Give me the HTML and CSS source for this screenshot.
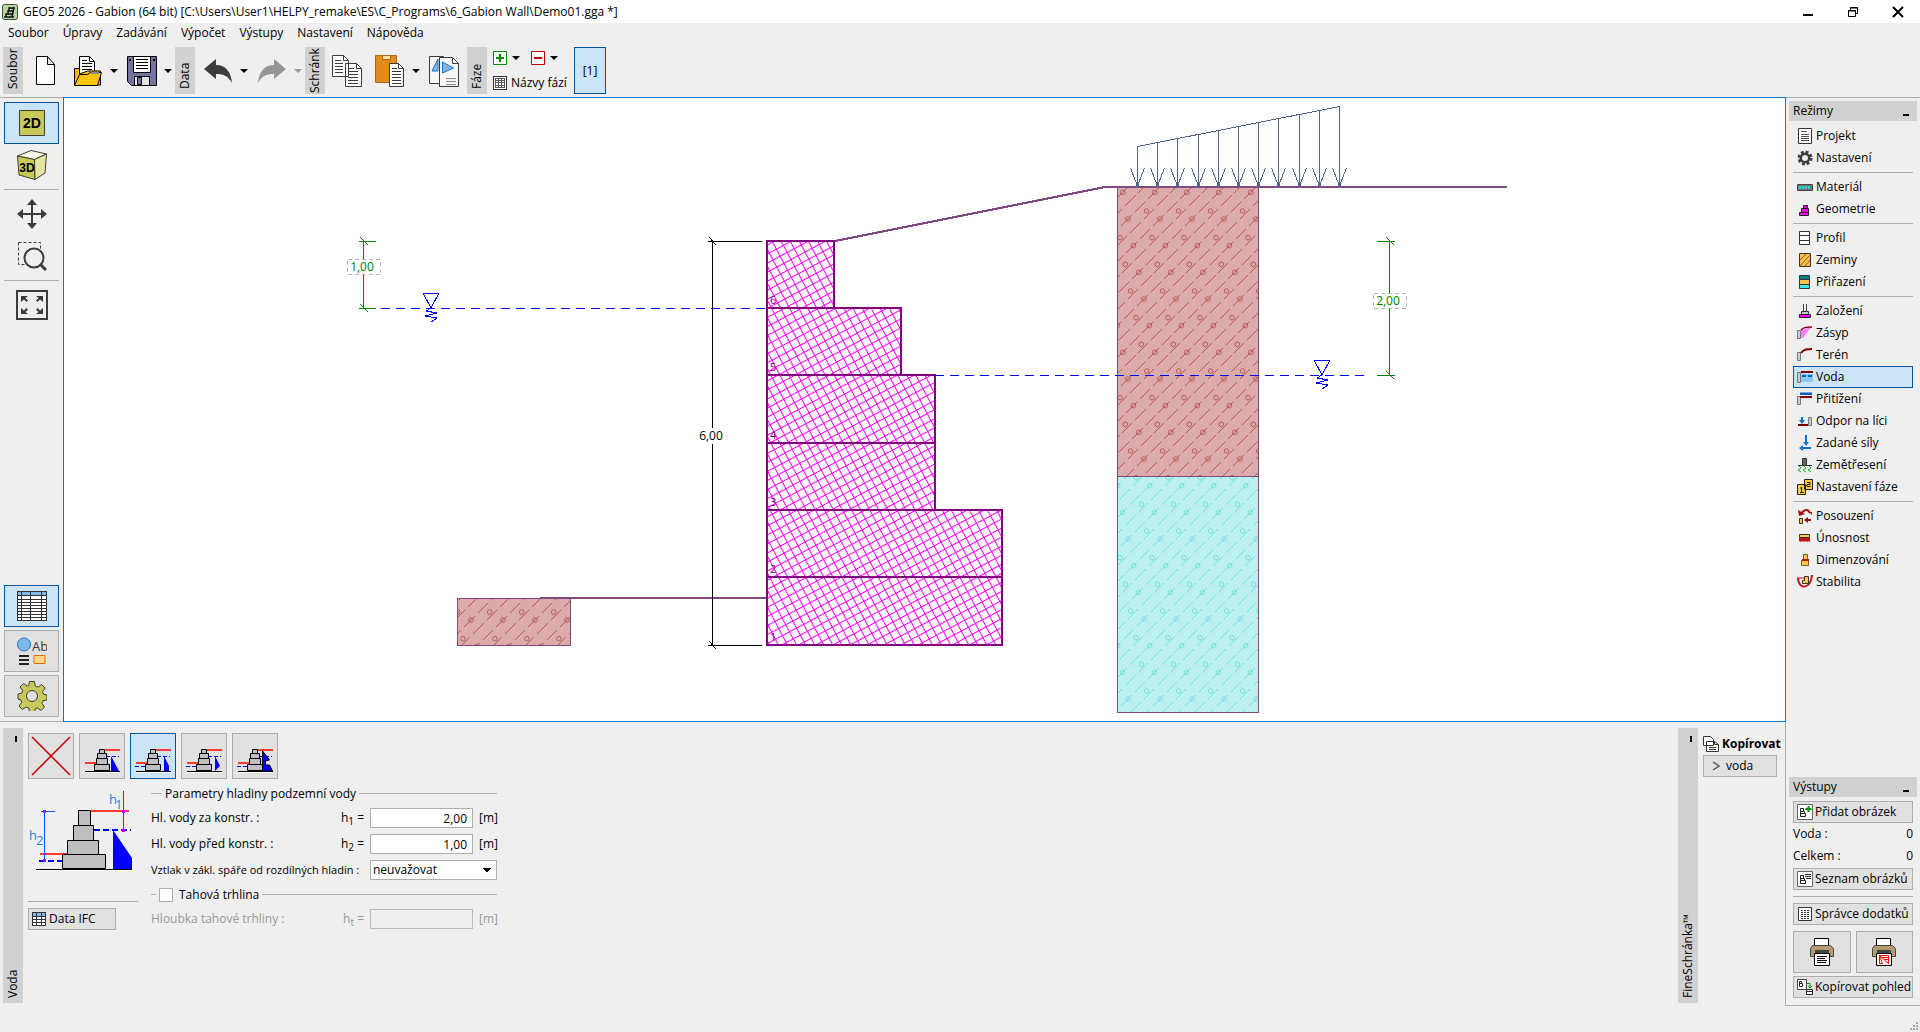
FILE: index.html
```html
<!DOCTYPE html>
<html lang="cs">
<head>
<meta charset="utf-8">
<title>GEO5 2026 - Gabion</title>
<link rel="stylesheet" href="styles.css">
</head>
<body>
<header class="titlebar">
  <svg class="app-icon" width="16" height="18" viewBox="0 0 16 18"><rect x=".5" y="1.500" width="15" height="15" rx="2" fill="#b9d3a4" stroke="#2e5a2b"/><path d="M2 14h10M4 14v-3h7M6 11V8h6M7 8V5h6M12 4l-2 10" fill="none" stroke="#111" stroke-width="1.500"/></svg>
  <h1>GEO5 2026 - Gabion (64 bit) [C:\Users\User1\HELPY_remake\ES\C_Programs\6_Gabion Wall\Demo01.gga *]</h1>
  <div class="window-buttons">
    <button aria-label="Minimalizovat"><svg width="12" height="12" viewBox="0 0 12 12"><path d="M1 9h10" stroke="#000" stroke-width="2"/></svg></button>
    <button aria-label="Obnovit"><svg width="12" height="12" viewBox="0 0 12 12" fill="none" stroke="#000"><path d="M1.500 4.500h7v6h-7zM3.500 4V1.500h7v6H9M1 5h8M3 2h8"/></svg></button>
    <button aria-label="Zavřít"><svg width="12" height="12" viewBox="0 0 12 12"><path d="M1 1l10 10M11 1L1 11" stroke="#000" stroke-width="2"/></svg></button>
  </div>
</header>
<nav class="menubar">
  <a href="#">Soubor</a><a href="#">Úpravy</a><a href="#">Zadávání</a><a href="#">Výpočet</a><a href="#">Výstupy</a><a href="#">Nastavení</a><a href="#">Nápověda</a>
</nav>
<div class="toolbar">
  <div class="handle"><span>Soubor</span></div>
  <button class="tool" aria-label="Nový"><svg width="24" height="32" viewBox="0 0 24 32"><path d="M3.500 1.500h11l7 8v20h-18zM14.500 1.500v8h7" fill="#fff" stroke="#000"/></svg></button>
  <div class="split"><button class="tool wide" aria-label="Otevřít"><svg width="30" height="32" viewBox="0 0 30 32"><path d="M6.500 20V1.500h10l5 5V18z" fill="#fff" stroke="#000"/><path d="M16.500 1.500v5h5M9 5.500h5M9 8.500h10M9 11.500h10M9 14.500h10" fill="none" stroke="#000"/><path d="M1.500 30V13.500h5V19l8-3h13V30z" fill="#ffb900" stroke="#000"/><path d="M1.500 30.500l5-11h8l3-2h11l-4 13z" fill="#ffc20e" stroke="#000"/><path d="M18 18h8" stroke="#888" stroke-width="2"/></svg></button><button class="drop" aria-label="Více"></button></div>
  <div class="split"><button class="tool wide" aria-label="Uložit"><svg width="30" height="32" viewBox="0 0 30 32"><path d="M.5 1.500h29v29h-25l-4-4z" fill="#73739f" stroke="#000"/><path d="M6.500 1.500h17v16h-17z" fill="#fff" stroke="#000"/><path d="M9 4.500h12M9 7.500h12M9 10.500h12M9 13.500h12" stroke="#000"/><path d="M7.500 21.500h15v9h-15z" fill="#e4e4e4" stroke="#000"/><path d="M10.500 22.500h4v7h-4z" fill="#73739f" stroke="#000"/><path d="M2 4h2v2H2zM26 4h2v2h-2z"/></svg></button><button class="drop" aria-label="Více"></button></div>
  <div class="handle"><span>Data</span></div>
  <div class="split"><button class="tool wide" aria-label="Zpět"><svg width="30" height="26" viewBox="0 0 30 26"><path d="M1 11L13 1v6c10 0 15 7 16 18-4-7-8-9-16-9v5z" fill="#3c3c3c"/></svg></button><button class="drop" aria-label="Více"></button></div>
  <div class="split"><button class="tool wide" aria-label="Znovu" disabled><svg width="30" height="26" viewBox="0 0 30 26"><path d="M29 11L17 1v6C7 7 2 14 1 25c4-7 8-9 16-9v5z" fill="#959595"/></svg></button><button class="drop dim" aria-label="Více" disabled></button></div>
  <div class="handle full"><span>Schránk</span></div>
  <button class="tool" aria-label="Kopírovat data"><svg width="32" height="34" viewBox="0 0 32 34"><path d="M1.500 1.500h11l5 5v16h-16zM14.500 9.500h11l5 5v18h-16z" fill="#fff" stroke="#3c3c3c"/><path d="M12.500 1.500v5h5M25.500 9.500v5h5M4 6.500h6M4 9.500h8M4 12.500h8M4 15.500h8M4 18.500h8M17 14.500h6M17 17.500h10M17 20.500h10M17 23.500h10M17 26.500h10M17 29.500h10" fill="none" stroke="#3c3c3c"/></svg></button>
  <div class="split"><button class="tool wide" aria-label="Vložit"><svg width="32" height="34" viewBox="0 0 32 34"><path d="M1.500 1.500h21v27h-21z" fill="#e38b1d" stroke="#b06a10"/><path d="M8.500 1.500h8v4h-8z" fill="#ffe2a8" stroke="#a86812"/><path d="M15.500 9.500h9l5 5v18h-14z" fill="#fff" stroke="#3c3c3c"/><path d="M24.500 9.500v5h5M18 14.500h5M18 17.500h9M18 20.500h9M18 23.500h9M18 26.500h9M18 29.500h9" fill="none" stroke="#3c3c3c"/></svg></button><button class="drop" aria-label="Více"></button></div>
  <button class="tool wide" aria-label="Kopírovat obrázek"><svg width="32" height="34" viewBox="0 0 32 34"><path d="M1.500 2.500h14v27h-14z" fill="#f6f6f6" stroke="#3c3c3c"/><path d="M4 17l6-12v12z" fill="#7db9ec" stroke="#1874c4"/><path d="M11.500 3.500h13l6 6v23h-19z" fill="#f6f6f6" stroke="#3c3c3c"/><path d="M24.500 3.500v6h6" fill="none" stroke="#3c3c3c"/><path d="M18 24.500h10M18 27.500h10M18 30.500h10" stroke="#888"/><path d="M14.500 8v11l11-5z" fill="#7db9ec" stroke="#1874c4"/></svg></button>
  <div class="handle"><span>Fáze</span></div>
  <div class="phases">
    <div class="phase-edit">
      <button class="mini" aria-label="Přidat fázi"><svg width="14" height="14" viewBox="0 0 14 14"><path d="M.5.5h13v13H.5z" fill="#fff" stroke="#008a00"/><path d="M7 3v8M3 7h8" stroke="#008a00" stroke-width="2"/></svg></button><button class="drop" aria-label="Více"></button>
      <button class="mini" aria-label="Odebrat fázi"><svg width="14" height="14" viewBox="0 0 14 14"><path d="M.5.5h13v13H.5z" fill="#fff" stroke="#c00000"/><path d="M3 7h8" stroke="#c00000" stroke-width="2"/></svg></button><button class="drop" aria-label="Více"></button>
    </div>
    <button class="phase-names"><svg width="14" height="14" viewBox="0 0 14 14" shape-rendering="crispEdges"><path d="M.5.5h13v13H.5z" fill="#fff" stroke="#333"/><path d="M2.500 2.500h9v9h-9zM2 4.500h10M2 6.500h10M2 9.500h10M5.500 2v10M8.500 2v10" fill="none" stroke="#555"/></svg>Názvy fází</button>
  </div>
  <button class="phase-tab">[1]</button>
</div>

<div class="workspace">
  <div class="left-part">
    <div class="view">
      <div class="viewbar">
        <button class="vbtn on" aria-label="2D"><svg width="28" height="28" viewBox="0 0 28 28"><path d="M1.500 1.500h25v25h-25z" fill="#c9c95a" stroke="#3c3c3c"/><text x="14" y="19" class="icon-text">2D</text></svg></button>
        <button class="vbtn flat" aria-label="3D"><svg width="32" height="32" viewBox="0 0 32 32" stroke="#3c3c3c" stroke-linejoin="round"><path d="M1.500 7l17 3.500 12-5.500L15 1.500z" fill="#fbfbe6"/><path d="M1.500 7l1.500 19 16 4.500-.5-20z" fill="#c9c95a"/><path d="M18.500 10.500l12-5.500-1.500 19-10 6.500z" fill="#e6e6a0"/><text x="11" y="23" class="icon-text small" stroke="none">3D</text></svg></button>
        <hr>
        <button class="vbtn flat" aria-label="Posun"><svg width="32" height="32" viewBox="0 0 32 32"><path d="M16 4v24M4 16h24" stroke="#3c3c3c" stroke-width="2"/><path d="M16 1l5 6H11zM16 31l5-6H11zM1 16l6-5v10zM31 16l-6-5v10z" fill="#3c3c3c"/></svg></button>
        <button class="vbtn flat" aria-label="Lupa"><svg width="30" height="30" viewBox="0 0 30 30" fill="none" stroke="#3c3c3c"><path d="M1.500 1.500h22v22h-22z" stroke-dasharray="3 2"/><circle cx="17" cy="17" r="9.500" stroke-width="2" fill="#efefef"/><path d="M23 23l6 6" stroke-width="3"/></svg></button>
        <hr>
        <button class="vbtn flat" aria-label="Zobrazit vše"><svg width="32" height="30" viewBox="0 0 32 30"><path d="M1 1h30v28H1z" fill="none" stroke="#3c3c3c" stroke-width="2"/><path d="M5 6h7l-2.500 2L12 10.500 10.500 12 8 9.500 5 12zM27 6h-7l2.500 2-2.500 2.500 1.500 1.500L24 9.500l3 2.500zM5 24h7l-2.500-2 2.500-2.500-1.500-1.500L8 20.500 5 18zM27 24h-7l2.500-2-2.500-2.500 1.500-1.500 2.500 2.500 3-2.500z" fill="#3c3c3c"/></svg></button>
        <div class="vbar-bottom">
          <button class="vbtn on" aria-label="Tabulka"><svg width="30" height="30" viewBox="0 0 30 30" shape-rendering="crispEdges"><path d="M0 0h30v30H0z" fill="#fff"/><path d="M0 0h30v5H0z" fill="#7fb9ea"/><path d="M.5.5h29v29H.5zM0 4.500h30M0 8.500h30M0 11.500h30M0 14.500h30M0 17.500h30M0 20.500h30M0 23.500h30M0 26.500h30M4.500 0v30M13.500 0v30M24.500 0v30" fill="none" stroke="#333"/></svg></button>
          <button class="vbtn" aria-label="Kreslení"><svg width="30" height="28" viewBox="0 0 30 28"><circle cx="7" cy="7.500" r="6.500" fill="#7fb9ea" stroke="#1874c4"/><text x="23" y="14" class="ab-text">Ab</text><path d="M2 19h10M2 23h10M2 27h10" stroke="#222" stroke-width="2"/><path d="M17 18.500h11v8H17z" fill="#fbd78a" stroke="#e07000"/></svg></button>
          <button class="vbtn" aria-label="Nastavení zobrazení"><svg width="30" height="30" viewBox="0 0 30 30"><path d="M12.500 1h5l.8 4.500 2.700 1.200 3.700-2.700 3.500 3.500-2.700 3.700 1 2.500 3.500.8v5l-4 .8-1 2.500 2.500 3.700-3.500 3.500-3.700-2.700-2 .9-.8 3.300h-5l-.8-4-2.700-1-3.500 2.500-3.500-3.500 2.700-3.700-1-2.500L1 18.500v-5l3.700-.8 1-2.500L3 6.500 6.500 3l3.700 2.700 1.500-.6z" transform="translate(0 -.5)" fill="#c9c95a" stroke="#3c3c3c"/><circle cx="15" cy="15" r="5.500" fill="#e1e1e1" stroke="#3c3c3c"/></svg></button>
        </div>
      </div>
      <main class="canvas">
        <svg class="drawing" viewBox="64 98 1721 623" shape-rendering="crispEdges">
          <defs>
            <g id="cell"><g shape-rendering="auto"><circle r="2.300"/><circle cx="18.670" cy="-8" r="2.300"/></g><path d="M-7 7L4-4M7-7L17-17M2 14L13 3M15.500.5l10-10"/></g>
            <g id="row"><use href="#cell" x="-64"/><use href="#cell" x="-32"/><use href="#cell"/><use href="#cell" x="32"/><use href="#cell" x="64"/></g>
            <g id="rows" fill="none"><use href="#row" x="-5.330" y="-26.670"/><use href="#row"/><use href="#row" x="5.330" y="26.670"/><use href="#row" x="10.670" y="53.330"/><use href="#row" x="16" y="80"/><use href="#row" x="21.330" y="106.670"/><use href="#row" x="26.670" y="133.330"/><use href="#row" y="160"/></g>
            <pattern id="soil-a" width="32" height="160" patternUnits="userSpaceOnUse" x="1128" y="219"><use href="#rows" stroke="#b85858"/></pattern>
            <pattern id="soil-b" width="32" height="160" patternUnits="userSpaceOnUse" x="1128" y="219"><use href="#rows" stroke="#74dfdb"/></pattern>
            <pattern id="soil-c" width="32" height="160" patternUnits="userSpaceOnUse" x="471" y="620"><use href="#rows" stroke="#b85858"/></pattern>
            <pattern id="mesh" width="8" height="8" patternUnits="userSpaceOnUse" patternTransform="rotate(-28)"><path d="M0 .5h8M.5 0v8" stroke="#ff00ff" fill="none"/></pattern>
            <g id="head"><path d="M-7-18L0 0 7-18M-1-3h2v3h-2z"/></g>
            <g id="level" fill="none"><path d="M-8-15H8L0 0z M0 0l-5 3 11 2-12 3 12 2-6 4"/></g>
          </defs>
          <g stroke="#804a80">
            <path d="M457.500 598.500h113v47h-113z" fill="#dbabab"/><path d="M457.500 598.500h113v47h-113z" fill="url(#soil-c)"/>
            <path d="M1117.500 187.500h141v289h-141z" fill="#dbabab"/><path d="M1117.500 187.500h141v289h-141z" fill="url(#soil-a)"/>
            <path d="M1117.500 476.500h141v236h-141z" fill="#bdf1ef"/><path d="M1117.500 476.500h141v236h-141z" fill="url(#soil-b)"/>
            <path d="M540 598h227M835 241L1105 187h402" fill="none" stroke-width="2"/>
          </g>
          <g fill="url(#mesh)" stroke="#800080" stroke-width="2">
            <path d="M767 241h67v67h-67z"/><path d="M767 308h134v67H767z"/><path d="M767 375h168v68H767z"/><path d="M767 443h168v67H767z"/><path d="M767 510h235v67H767z"/><path d="M767 577h235v68H767z"/>
          </g>
          <g class="block-no"><text x="770" y="304">6</text><text x="770" y="371">5</text><text x="770" y="439">4</text><text x="770" y="506">3</text><text x="770" y="573">2</text><text x="770" y="641">1</text></g>
          <g stroke="#000" fill="none"><path d="M712.500 241v187M712.500 444v202M708 241.500h54M708 645.500h54M709 237l7 8M709 641l7 8"/></g>
          <g stroke="#008000" fill="none"><path d="M363.500 241v18M363.500 274v35M359 241.500h17M359 308.500h17M360 237l8 8M360 304l8 8M1389.500 241v53M1389.500 308v68M1377 241.500h18M1377 375.500h18M1386 237l8 8M1386 371l8 8"/></g>
          <g stroke="#b4b4b4" fill="none" stroke-dasharray="4 3"><path d="M347.500 259.500h33v15h-33zM1373.500 293.500h33v15h-33z"/></g>
          <g class="dim"><text x="711" y="440">6,00</text><text x="362" y="271" class="green">1,00</text><text x="1388" y="305" class="green">2,00</text></g>
          <g stroke="#0000ff" fill="none"><path d="M381 308.500h386M935 375.500h432" stroke-dasharray="9 6"/><use href="#level" x="431" y="308"/><use href="#level" x="1322" y="375"/></g>
          <g stroke="#506490" fill="none">
            <path d="M1137.500 146.500l202-40M1137.500 146v40M1157.500 142v44M1177.500 138v48M1198.500 134v52M1218.500 130v56M1238.500 126v60M1258.500 122v64M1278.500 118v68M1299.500 114v72M1319.500 110v76M1339.500 106v80"/>
            <use href="#head" x="1137.500" y="186"/><use href="#head" x="1157.500" y="186"/><use href="#head" x="1177.500" y="186"/><use href="#head" x="1198.500" y="186"/><use href="#head" x="1218.500" y="186"/><use href="#head" x="1238.500" y="186"/><use href="#head" x="1258.500" y="186"/><use href="#head" x="1278.500" y="186"/><use href="#head" x="1299.500" y="186"/><use href="#head" x="1319.500" y="186"/><use href="#head" x="1339.500" y="186"/>
          </g>
        </svg>
      </main>
    </div>

    <section class="bottom">
      <div class="handle tall"><i></i><span>Voda</span></div>
      <div class="water">
        <svg class="defs" width="0" height="0"><defs>
          <g id="wall"><path d="M6 39.500h35" stroke="#fff" fill="none"/><path d="M6 38.500h35" stroke="#000" fill="none"/><path d="M26 17h15" stroke="#ff3b30" stroke-width="2"/><path d="M6 30h11" stroke="#ff3b30" stroke-width="2"/><path d="M27 23.500h13" stroke="#00f" stroke-dasharray="4 2"/><g fill="#bfbfbf" stroke="#000"><path d="M20.500 16.500h5v4h-5zM18.500 20.500h9v5h-9zM17.500 25.500h11v6h-11zM15.500 31.500h15v6h-15z"/></g></g>
        </defs></svg>
        <div class="water-types">
          <button aria-label="Bez vody"><svg width="46" height="46" viewBox="0 0 46 46"><path d="M4 4l38 38M42 4L4 42" stroke="#cc0000" stroke-width="1.500"/></svg></button>
          <button aria-label="Typ 1"><svg width="46" height="46" viewBox="0 0 46 46"><use href="#wall"/><path d="M32 23l8 15h-8z" fill="#00f"/></svg></button>
          <button class="on" aria-label="Typ 2"><svg width="46" height="46" viewBox="0 0 46 46"><use href="#wall"/><path d="M5 33.500h10" stroke="#00f" stroke-dasharray="4 2"/><path d="M34 23l5 10v5h-5z" fill="#00f"/></svg></button>
          <button aria-label="Typ 3"><svg width="46" height="46" viewBox="0 0 46 46"><use href="#wall"/><path d="M5 33.500h10" stroke="#00f" stroke-dasharray="4 2"/><path d="M34 23l5 10-5 5z" fill="#00f"/></svg></button>
          <button aria-label="Typ 4"><svg width="46" height="46" viewBox="0 0 46 46"><use href="#wall"/><path d="M5 33.500h10" stroke="#00f" stroke-dasharray="4 2"/><path d="M30.500 18l7 9-4 1v4h4l3 6h-10z" fill="#00f" stroke="#000"/></svg></button>
        </div>
        <div class="water-body">
          <div class="sketch">
            <svg width="110" height="112" viewBox="28 785 110 112">
              <path d="M36 870.500h96" stroke="#fff"/><path d="M36 869.500h96" stroke="#000"/>
              <path d="M91 811h38M40 854h27" stroke="#ff3b30" stroke-width="2"/><path d="M94 830h37M39 861h23" stroke="#00f" stroke-width="2" stroke-dasharray="6 3"/>
              <path d="M113 830l19 28v11h-19z" fill="#00f"/>
              <path d="M78.500 810.500h12v15h-12zM73.500 825.500h20v15h-20zM67.500 840.500h31v14h-31zM62.500 854.500h43v14h-43z" fill="#bfbfbf" stroke="#000"/>
              <path d="M44.500 811v50M41 811.500h14M123.500 791v39" stroke="#0050ff"/><path d="M43 810h3v3h-3zM43 859h3v3h-3zM122 810h3v3h-3zM122 829h3v3h-3z" fill="#c000ff"/>
              <g class="sketch-text"><text x="109" y="804">h</text><text x="115" y="809">1</text><text x="29" y="840">h</text><text x="36" y="845">2</text></g>
            </svg>
            <hr>
            <button class="btn ifc"><svg width="14" height="14" viewBox="0 0 14 14" shape-rendering="crispEdges"><path d="M0 0h14v14H0z" fill="#fff"/><path d="M0 0h14v4H0z" fill="#7fb9ea"/><path d="M.5.5h13v13H.5zM0 4.500h14M0 7.500h14M0 10.500h14M4.500 0v14M9.500 0v14" fill="none" stroke="#333"/></svg>Data IFC</button>
          </div>
          <form class="form">
            <div class="group-title"><span>Parametry hladiny podzemní vody</span></div>
            <div class="row"><label for="h1">Hl. vody za konstr. :</label><span>h<sub>1</sub> =</span><input id="h1" value="2,00"><span class="unit">[m]</span></div>
            <div class="row"><label for="h2">Hl. vody před konstr. :</label><span>h<sub>2</sub> =</span><input id="h2" value="1,00"><span class="unit">[m]</span></div>
            <div class="row"><label for="uplift" class="long">Vztlak v zákl. spáře od rozdílných hladin :</label><select id="uplift"><option>neuvažovat</option></select></div>
            <div class="group-title crack"><input type="checkbox" id="crack"><label for="crack">Tahová trhlina</label></div>
            <div class="row off"><label for="ht">Hloubka tahové trhliny :</label><span>h<sub>t</sub> =</span><input id="ht" disabled><span class="unit">[m]</span></div>
          </form>
        </div>
      </div>
      <div class="handle tall"><i></i><span>FineSchránka™</span></div>
      <div class="clip">
        <h2><svg width="16" height="16" viewBox="0 0 16 16" fill="#fff" stroke="#333"><path d="M.5.5h7l3 3v6h-10zM3.500 5.500h8l4 3v7h-12zM11.500 5.500v3h4M6 9.500h4M6 11.500h7M6 13.500h7"/></svg>Kopírovat</h2>
        <button class="btn"><svg width="8" height="12" viewBox="0 0 8 12"><path d="M1 2l6 4-6 4" fill="none" stroke="#555" stroke-width="1.500"/></svg>voda</button>
      </div>
    </section>
  </div>

  <aside class="sidebar">
    <section>
      <h2 class="panel-head">Režimy<i></i></h2>
      <nav class="modes">
        <a href="#"><svg viewBox="0 0 16 16"><path d="M1.500.5h13v15h-13z" fill="#fff" stroke="#333"/><path d="M4 3.500h6M4 6.500h8M4 8.500h8M4 10.500h8M4 12.500h8" stroke="#555"/></svg>Projekt</a>
        <a href="#"><svg viewBox="0 0 16 16"><circle cx="8" cy="8" r="6" fill="none" stroke="#3c3c3c" stroke-width="3" stroke-dasharray="2.700 2.012"/><circle cx="8" cy="8" r="4.200" fill="none" stroke="#3c3c3c" stroke-width="2.500"/></svg>Nastavení</a>
        <hr>
        <a href="#"><svg viewBox="0 0 16 16"><path d="M.5 5.500h15v6H.5z" fill="#777" stroke="#444"/><path d="M2 8.500h12" stroke="#0ff" stroke-width="2" stroke-dasharray="2 1"/></svg>Materiál</a>
        <a href="#"><svg viewBox="0 0 16 16"><path d="M6.500 4.500h4v3h-4zM4.500 7.500h7v4h-7zM2.500 11.500h9v3h-9z" fill="#f0f" stroke="#222"/></svg>Geometrie</a>
        <hr>
        <a href="#"><svg viewBox="0 0 16 16"><path d="M2.500 1.500h10v13h-10zM2.500 5.500h10M2.500 10.500h10" fill="#fff" stroke="#333"/></svg>Profil</a>
        <a href="#"><svg viewBox="0 0 16 16"><path d="M2.500 1.500h11v13h-11z" fill="#ffc04d" stroke="#333"/><path d="M3 8l6-6M3 14L13 3M8 14l5-6" stroke="#8a5a10"/></svg>Zeminy</a>
        <a href="#"><svg viewBox="0 0 16 16"><path d="M2.500 1.500h10v4h-10z" fill="#008080" stroke="#333"/><path d="M2.500 5.500h10v5h-10z" fill="#ffc04d" stroke="#333"/><path d="M2.500 10.500h10v4h-10z" fill="#3fe8e8" stroke="#333"/></svg>Přiřazení</a>
        <hr>
        <a href="#"><svg viewBox="0 0 16 16"><path d="M6.500 1v7M9.500 1v7" stroke="#444"/><path d="M4.500 8.500h7v3h-7z" fill="#ccc" stroke="#333"/><path d="M2.500 11.500h11v3h-11z" fill="#f0f" stroke="#222"/></svg>Založení</a>
        <a href="#"><svg viewBox="0 0 16 16"><path d="M4 5l10-3-8 11H4z" fill="#ff80ff"/><path d="M.5 5.500h3v8h-3z" fill="#ccc" stroke="#777"/><path d="M4 5c3-3 6-3 11-3" fill="none" stroke="#800000" stroke-width="1.500"/></svg>Zásyp</a>
        <a href="#"><svg viewBox="0 0 16 16"><path d="M.5 5.500h3v8h-3z" fill="#ccc" stroke="#777"/><path d="M4 6c3-4 6-4 11-4" fill="none" stroke="#800000" stroke-width="2"/></svg>Terén</a>
        <a href="#" class="on"><svg viewBox="0 0 16 16"><path d="M4 5h12v8H4z" fill="#8cc4f2"/><path d="M.5 3.500h3v10h-3z" fill="#ccc" stroke="#777"/><path d="M4 3h12" stroke="#800000" stroke-width="2"/><path d="M5 7h11" stroke="#0060c0" stroke-width="2" stroke-dasharray="4 2"/></svg>Voda</a>
        <a href="#"><svg viewBox="0 0 16 16"><path d="M.5 5.500h3v8h-3z" fill="#ccc" stroke="#777"/><path d="M3 6h12" stroke="#800000" stroke-width="2"/><path d="M3 4l0-2 1-1 1 1 1-1 1 1 1-1 1 1 1-1 1 1 1-1 1 1 1-1 1 1v2z" fill="#0060c0"/></svg>Přitížení</a>
        <a href="#"><svg viewBox="0 0 16 16"><path d="M11.500 4.500h3v8h-3z" fill="#ccc" stroke="#777"/><path d="M1 12h10" stroke="#800000" stroke-width="2"/><path d="M5 4v5" stroke="#1070d0" stroke-width="2"/><path d="M2 7h6l-3 4z" fill="#1070d0"/></svg>Odpor na líci</a>
        <a href="#"><svg viewBox="0 0 16 16"><path d="M9 0v9M4 13h10" stroke="#1070d0" stroke-width="2"/><path d="M6 7h6l-3 4zM6 10v6l-4-3z" fill="#1070d0"/></svg>Zadané síly</a>
        <a href="#"><svg viewBox="0 0 16 16"><path d="M5.500 1.500h4v7h-4z" fill="#666" stroke="#333"/><path d="M1 8.500h14" stroke="#333"/><path d="M2 9l2 2-3 2 3 2M7 9l2 2-3 2 3 2M12 9l2 2-3 2 3 2" fill="none" stroke="#18b030"/></svg>Zemětřesení</a>
        <a href="#"><svg viewBox="0 0 16 16"><path d="M7.500.5h8v10h-8zM.5 5.500h8v10h-8z" fill="#ffc84a" stroke="#222"/><path d="M4.500 8v6M3 9h2M3 13.500h4M10 3.500h3v2h-3v2h3.500" fill="none" stroke="#222"/></svg>Nastavení fáze</a>
        <hr>
        <a href="#"><svg viewBox="0 0 16 16"><path d="M4 6c3-5 7-5 9-1" fill="none" stroke="#a01010" stroke-width="2"/><path d="M1 2l1 6 6-2zM12 4h3v3z" fill="#a01010"/><path d="M2.500 10.500h3v5h-3z" fill="#ffc84a" stroke="#333"/><path d="M8 12h6" stroke="#a01010" stroke-width="2"/><path d="M11 9v6l-4-3z" fill="#a01010"/></svg>Posouzení</a>
        <a href="#"><svg viewBox="0 0 16 16"><path d="M2.500 4.500h10v3h-10z" fill="#ffc84a" stroke="#333"/><path d="M2 8h11v4l-2-1-1 1-2-1-1 1-2-1-1 1-2-1z" fill="#c01010"/></svg>Únosnost</a>
        <a href="#"><svg viewBox="0 0 16 16"><path d="M6.500 2.500h4v5h1v6h-7v-5h2z" fill="#ffc84a" stroke="#7a5a10"/><path d="M5 8h7" stroke="#c01010" stroke-width="2"/></svg>Dimenzování</a>
        <a href="#"><svg viewBox="0 0 16 16"><path d="M1 4c0 12 13 12 14-3" fill="none" stroke="#c01020" stroke-width="2"/><path d="M7.500 2.500h4v7h-6v-3h2z" fill="#ffc84a" stroke="#333"/><path d="M0 4h7" stroke="#c01020"/></svg>Stabilita</a>
      </nav>
    </section>
    <section class="outputs">
      <h2 class="panel-head">Výstupy<i></i></h2>
      <div class="out-body">
        <button class="btn"><svg width="16" height="16" viewBox="0 0 16 16"><path d="M.5.500h15v15H.5z" fill="#fff" stroke="#666"/><path d="M3.500 4.500h3v3h-3zM3.500 7.500h4v2h-4zM3.500 9.500h5v3h-5z" fill="none" stroke="#222"/><path d="M11.500 2v6M8.500 5h6" stroke="#009000" stroke-width="2"/></svg>Přidat obrázek</button>
        <p><span>Voda :</span><span>0</span></p>
        <p><span>Celkem :</span><span>0</span></p>
        <button class="btn"><svg width="16" height="16" viewBox="0 0 16 16"><path d="M.5.500h15v15H.5z" fill="#fff" stroke="#666"/><path d="M3.500 4.500h3v3h-3zM3.500 7.500h4v2h-4zM3.500 9.500h5v3h-5zM8 3.500h6M8 5.500h6M9 7.500h5" fill="none" stroke="#222"/></svg>Seznam obrázků</button>
        <hr>
        <button class="btn"><svg width="16" height="16" viewBox="0 0 16 16"><path d="M1.500 1.500h13v13h-13z" fill="#fff" stroke="#333"/><path d="M4 4.500h9M4 6.500h9M4 8.500h9M4 10.500h9M4 12.500h9" stroke="#333" stroke-dasharray="2 1"/></svg>Správce dodatků</button>
        <div class="printers">
          <button class="btn" aria-label="Tisk"><svg width="26" height="30" viewBox="0 0 26 30"><path d="M5.500 9V1.500h14V9" fill="#fff" stroke="#000"/><path d="M3.500 8.500h18l3 3v8h-23v-8z" fill="#b39b6f" stroke="#444"/><path d="M6 13h14v5H6z" fill="#444"/><path d="M5.500 16.500h15v12h-15z" fill="#fff" stroke="#000"/><path d="M8 19.500h10M8 21.500h8M8 23.500h10M8 25.500h9" stroke="#000"/></svg></button>
          <button class="btn" aria-label="Tisk obrázku"><svg width="26" height="30" viewBox="0 0 26 30"><path d="M5.500 9V1.500h14V9" fill="#fff" stroke="#000"/><path d="M3.500 8.500h18l3 3v8h-23v-8z" fill="#b39b6f" stroke="#444"/><path d="M6 13h14v5H6z" fill="#444"/><path d="M5.500 16.500h15v12h-15z" fill="#fff" stroke="#000"/><path d="M8.500 18.500h9v8zM8.500 18.500v8h3zM11 20.500h6M13 22.500h4" stroke="#f00" fill="none"/></svg></button>
        </div>
        <button class="btn"><svg width="16" height="16" viewBox="0 0 16 16"><path d="M.5.500h9v10h-9z" fill="#fff" stroke="#444"/><path d="M2.500 2.500h2v2h-2zM2.500 4.500h3v3h-3z" fill="none" stroke="#222"/><path d="M10 4.500h3v4M11 7l2 2 2-2" fill="none" stroke="#009000"/><path d="M9.500 10.500h6v5h-6zM9.500 12.500h6" fill="#fff" stroke="#222"/></svg>Kopírovat pohled</button>
      </div>
    </section>
  </aside>
</div>
<footer class="status"><svg width="8" height="8" viewBox="0 0 8 8"><path d="M6 0h2v2H6zM3 3h2v2H3zM6 3h2v2H6zM0 6h2v2H0zM3 6h2v2H3zM6 6h2v2H6z" fill="#aaa"/></svg></footer>
</body>
</html>
```
FILE: styles.css
```css
* { box-sizing: border-box; }

body {
  margin: 0;
  min-height: 100vh;
  display: flex;
  flex-direction: column;
  background: #efefef;
  color: #000;
  font: 12px/16px "Open Sans", "Noto Sans", sans-serif;
}

button, input, select { font: inherit; color: inherit; margin: 0; padding: 0; border-radius: 0; }
button { background: none; border: 0; display: flex; align-items: center; justify-content: center; }
h1, h2, p { margin: 0; font-size: inherit; font-weight: normal; }
a { color: inherit; text-decoration: none; }
svg { flex: none; display: block; }
hr { width: 100%; height: 1px; border: 0; margin: 0; background: #adadad; flex: none; }

.titlebar { height: 23px; background: #fff; display: flex; align-items: center; padding-left: 2px; gap: 5px; }
.titlebar h1 { flex: 1; white-space: nowrap; }
.window-buttons { display: flex; }
.window-buttons button { width: 45px; height: 23px; }

.menubar { height: 20px; display: flex; align-items: center; gap: 14px; padding-left: 8px; }

.toolbar { height: 54px; display: flex; align-items: flex-start; gap: 2px; padding: 4px 3px 0; }
.handle {
  width: 20px; height: 47px; background: #d1d1d1; overflow: hidden; flex: none;
  display: flex; justify-content: flex-start; align-items: center;
  writing-mode: vertical-rl; text-orientation: sideways; transform: rotate(180deg);
  padding-top: 5px; line-height: 18px;
}
.handle.full { padding-top: 1px; }
.handle span { white-space: nowrap; }
.tool { width: 40px; height: 48px; }
.tool.wide { width: 42px; }
.split { display: flex; }
.drop { width: 10px; height: 48px; }
.drop::before { content: ""; border: 4px solid transparent; border-top-color: #000; border-bottom: 0; }
.drop.dim::before { border-top-color: #999; }
.phases { padding: 4px 0 0 4px; display: flex; flex-direction: column; gap: 10px; width: 83px; }
.phase-edit { display: flex; gap: 4px; }
.phase-edit .drop { height: 14px; }
.phase-edit .mini { width: 14px; height: 14px; }
.phase-edit .drop + .mini { margin-left: 6px; }
.phase-names { gap: 4px; white-space: nowrap; justify-content: flex-start; }
.phase-tab { width: 32px; height: 47px; background: #cce4f7; border: 1px solid #00549a; }

.workspace { flex: 1; display: flex; }
.left-part { flex: 1; min-width: 0; display: flex; flex-direction: column; }
.view { flex: 1; display: flex; min-height: 520px; }
.viewbar {
  width: 63px; border-top: 1px solid #adadad; border-bottom: 1px solid #adadad;
  padding: 4px; display: flex; flex-direction: column;
}
.viewbar hr { margin: 3px 0; }
.vbtn { width: 55px; height: 42px; background: #e1e1e1; border: 1px solid #adadad; flex: none; }
.vbtn.flat { background: none; border-color: transparent; }
.vbtn.on, .water-types .on { background: #cce4f7; border-color: #00549a; }
.vbar-bottom { margin-top: auto; display: flex; flex-direction: column; gap: 3px; }
.icon-text { font: bold 14px "Liberation Sans", sans-serif; text-anchor: middle; }
.icon-text.small { font-size: 12px; }
.ab-text { font: 13px "Open Sans", sans-serif; text-anchor: middle; fill: #3c3c3c; }

.canvas { flex: 1; min-width: 0; background: #fff; border: 1px solid #0078d0; margin-right: -1px; position: relative; z-index: 1; display: flex; }
.drawing { width: 100%; height: 100%; flex: 1; min-width: 0; }
.block-no { font-size: 11px; fill: #800080; }
.dim { text-anchor: middle; }
.dim .green { fill: #008000; }

.bottom { display: flex; padding: 6px 8px 2px 3px; height: 284px; }
.handle.tall { height: 275px; position: relative; }
.handle.tall i { position: absolute; right: auto; left: 6px; bottom: 8px; width: 2px; height: 6px; background: #000; }
.water { flex: 1; padding: 5px 0 0 5px; }
.defs { position: absolute; }
.water-types { display: flex; gap: 5px; }
.water-types button { width: 46px; height: 46px; background: #e1e1e1; border: 1px solid #adadad; }
.water-body { display: flex; gap: 13px; padding-top: 6px; }
.sketch { width: 110px; }
.sketch hr { margin: 4px 0 6px; }
.sketch-text { fill: #3080f0; font-size: 13px; }
.btn { height: 22px; background: #e1e1e1; border: 1px solid #adadad; justify-content: flex-start; gap: 3px; padding-left: 3px; white-space: nowrap; }
.ifc { width: 88px; }
.form { width: 346px; display: flex; flex-direction: column; gap: 6px; }
.group-title { height: 17px; display: flex; align-items: center; gap: 3px; }
.group-title::before, .group-title::after { content: ""; height: 1px; background: #adadad; flex: 1; }
.group-title::before { flex: none; width: 11px; }
.group-title.crack::before { width: 5px; }
.crack label { padding-left: 3px; }
.crack input { appearance: none; width: 14px; height: 14px; background: #fff; border: 1px solid #adadad; }
.row { height: 20px; display: flex; align-items: center; gap: 6px; }
.row label { flex: 1; white-space: nowrap; }
.row .long { font-size: 11px; }
.row input { width: 103px; height: 20px; border: 1px solid #adadad; background: #fff; text-align: right; padding: 0 5px; }
.row select {
  width: 127px; height: 20px; border: 1px solid #adadad; padding: 0 2px; appearance: none;
  background: linear-gradient(to bottom left, #000 50%, transparent 51%) right 9px center / 4px 4px no-repeat,
    linear-gradient(to bottom right, #000 50%, transparent 51%) right 5px center / 4px 4px no-repeat, #fff;
  background-position: right 9px center, right 5px center, 0 0;
}
.row .unit { width: 18px; }
.row.off { color: #999; }
.row.off input { background: #efefef; border-color: #bbb; }
sub { font-size: 10px; line-height: 1px; }

.clip { width: 79px; padding: 5px 0 0 5px; }
.clip h2 { display: flex; align-items: center; gap: 3px; font-weight: bold; height: 22px; }
.clip .btn { width: 100%; padding-left: 8px; gap: 6px; }

.sidebar { width: 135px; border: 1px solid #adadad; border-right: 0; padding: 3px 3px 7px; display: flex; flex-direction: column; justify-content: space-between; }
.panel-head { height: 20px; background: #d1d1d1; display: flex; align-items: center; justify-content: space-between; padding: 0 8px 0 4px; }
.panel-head i { width: 6px; height: 2px; background: #000; margin-top: 8px; }
.modes { padding: 4px 4px 0; display: flex; flex-direction: column; }
.modes hr { margin: 3px 0; }
.modes a { height: 22px; display: flex; align-items: center; gap: 3px; padding-left: 3px; border: 1px solid transparent; white-space: nowrap; }
.modes svg { width: 16px; height: 16px; }
.modes .on { background: #cce4f7; border-color: #00549a; }
.out-body { padding: 4px 4px 0; display: flex; flex-direction: column; }
.out-body .btn { gap: 2px; }
.out-body p { height: 22px; display: flex; justify-content: space-between; align-items: center; }
.out-body p + .btn { margin-top: 1px; }
.out-body hr { margin: 6px 0; }
.printers { display: grid; grid-template-columns: 1fr 1fr; gap: 5px; margin: 6px 0 3px; }
.printers .btn { height: 42px; justify-content: center; padding: 0; }

.status { height: 26px; display: flex; justify-content: flex-end; align-items: flex-end; padding: 2px; }
```
